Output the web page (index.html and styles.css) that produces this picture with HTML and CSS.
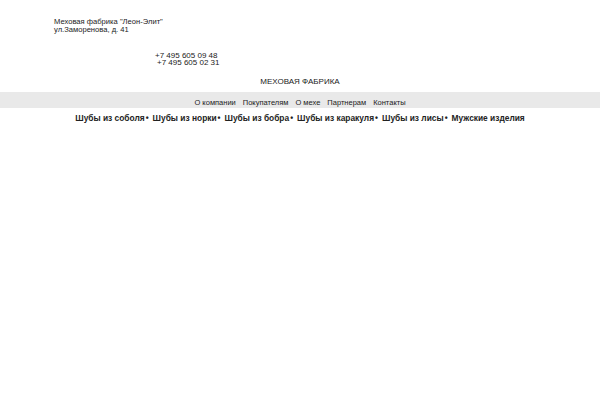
FILE: index.html
```html
<!DOCTYPE html>
<html lang="ru">
<head>
<meta charset="utf-8">
<link rel="stylesheet" href="styles.css">
</head>
<body>
<div class="top">
  <div class="addr">Меховая фабрика "Леон-Элит"<br>ул.Заморенова, д. 41</div>
  <div class="phones"><div class="p1">+7 495 605 09 48</div><div class="p2">+7 495 605 02 31</div></div>
</div>
<div class="title">МЕХОВАЯ ФАБРИКА</div>
<div class="menu">
  <span>О компании</span><span>Покупателям</span><span>О мехе</span><span>Партнерам</span><span>Контакты</span>
</div>
<div class="cats">
  <span>Шубы из соболя</span><i>•</i><span>Шубы из норки</span><i>•</i><span>Шубы из бобра</span><i>•</i><span>Шубы из каракуля</span><i>•</i><span>Шубы из лисы</span><i>•</i><span>Мужские изделия</span>
</div>
</body>
</html>
```
FILE: styles.css
```css
body { margin: 0; font-family: "Liberation Sans", Arial, sans-serif; color: #222; background: #fff; }
.top { padding: 18px 0 0 54px; }
.addr { font-size: 7.6px; line-height: 8px; }
.phones { margin: 18px 0 0 101px; font-size: 8px; line-height: 7px; }
.p2 { padding-left: 2px; }
.title { text-align: center; font-size: 8px; margin-top: 11px; height: 13px; line-height: 10px; }
.menu { background: #e9e9e9; height: 16px; margin-top: 2px; display: flex; justify-content: center; align-items: flex-end; gap: 7px; font-size: 7.5px; line-height: 10px; }
.cats { display: flex; justify-content: center; font-weight: bold; font-size: 8.4px; margin-top: 5px; line-height: 10px; }
.cats i { font-style: normal; margin: 0 4px 0 1px; }
```
